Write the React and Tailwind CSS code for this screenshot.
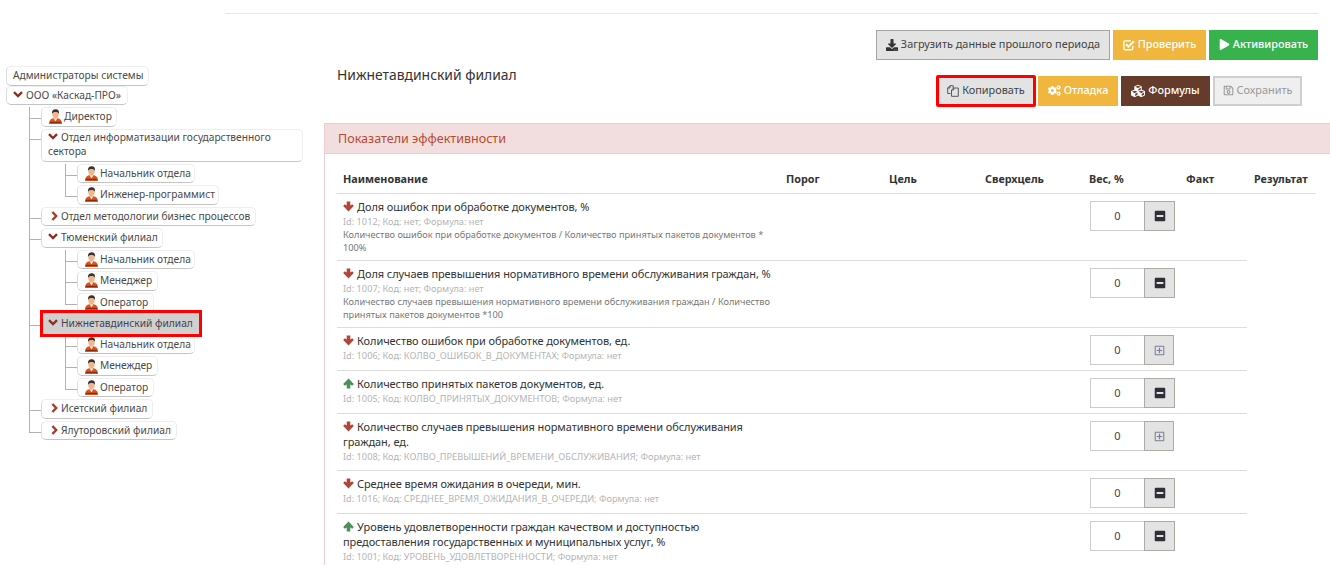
import React from "react";
import { FaDownload, FaPlay, FaCogs, FaCubes, FaRegSave, FaMinusSquare, FaRegPlusSquare } from "react-icons/fa";

function Person() {
  return (
    <svg width="13" height="15" viewBox="0 0 13 15" className="shrink-0">
      <path d="M0 15 C0 11 2.2 9.8 4.2 9.3 L8.8 9.3 C10.8 9.8 13 11 13 15 Z" fill="#d9541e" />
      <path d="M4.6 9.3 L6.5 12.6 L8.4 9.3 Z" fill="#f5f0e8" />
      <rect x="1" y="12.8" width="11" height="1.2" fill="#8c2a10" />
      <ellipse cx="6.5" cy="5.3" rx="3.2" ry="4.1" fill="#eeb68c" />
      <path d="M3 5 C2.5 1.4 4.7 0.2 6.8 0.2 C9.2 0.2 10.5 1.8 10 5 C9.5 3.4 8.4 2.9 6.5 2.9 C4.7 2.9 3.6 3.4 3 5 Z" fill="#3b3230" />
    </svg>
  );
}

function FilesIcon() {
  return (
    <svg width="12" height="12" viewBox="0 0 12 12" className="shrink-0" fill="none" stroke="#5a5560" strokeWidth="1">
      <path d="M3.5 8.5 H0.7 V3 L3 0.7 H6.2 V3" />
      <path d="M3 0.7 V3 H0.7" />
      <path d="M4.5 11.3 V5 L6.7 3 H11.3 V11.3 Z" fill="#e3e3e3" />
      <path d="M6.7 3 V5 H4.5" />
    </svg>
  );
}

function CheckIcon() {
  return (
    <svg width="12" height="12" viewBox="0 0 12 12" className="shrink-0" fill="none" stroke="white">
      <path d="M9.8 7 V9.3 C9.8 10.2 9.2 10.8 8.3 10.8 H2.2 C1.3 10.8 0.8 10.2 0.8 9.3 V3.4 C0.8 2.5 1.3 1.9 2.2 1.9 H8" strokeWidth="1.4" />
      <path d="M3 5.3 L5.4 7.7 L11 2.2" strokeWidth="2" />
    </svg>
  );
}

function Arrow({ up }) {
  return (
    <svg width="11" height="11" viewBox="0 0 11 11" className={`inline mr-[3px] align-[-1px] ${up ? "rotate-180" : ""}`}>
      <path d="M3.7 0.5 H7.3 V4.6 L9.2 3.2 L10.8 5 L5.5 10.5 L0.2 5 L1.8 3.2 L3.7 4.6 Z" fill={up ? "#4b8f5b" : "#b2453a"} />
    </svg>
  );
}

const nodeBox = "bg-white rounded-[5px] border border-[#eee] border-l-[#ddd] border-b-[#c4c4c4] text-[#4a4a4a]";

function Chev({ kind }) {
  if (kind === "down")
    return (
      <svg width="10" height="7" viewBox="0 0 10 7" className="inline mr-[3px] align-[1px]">
        <path d="M1 1.2 L5 5 L9 1.2" fill="none" stroke="#8f2f20" strokeWidth="2.4" />
      </svg>
    );
  if (kind === "right")
    return (
      <svg width="7" height="10" viewBox="0 0 7 10" className="inline ml-[3px] mr-[3px] align-[-1px]">
        <path d="M1.4 1 L5.2 5 L1.4 9" fill="none" stroke="#a93a22" strokeWidth="2.4" />
      </svg>
    );
  return null;
}

function Connector({ last, h }) {
  return (
    <div className="flex flex-col w-[12px] shrink-0">
      <div className={`${h} border-l border-b border-[#b5b0ab] shrink-0`} />
      {!last && <div className="flex-1 border-l border-[#b5b0ab]" />}
    </div>
  );
}

function Node({ label, icon, w, mb = "mb-[2px]" }) {
  return (
    <div className={`${w} h-[19.5px] ${mb} ${nodeBox} ${icon === "person" ? "pl-[7px]" : "pl-[6px]"} flex items-center whitespace-nowrap`}>
      {icon === "person" && <span className="mr-[2px] flex"><Person /></span>}
      <span><Chev kind={icon} />{label}</span>
    </div>
  );
}

function Selected({ label }) {
  return (
    <div className="relative z-10 w-[156px] h-[21px] ml-[2px] -mt-[0.75px] mb-[0.5px] outline-[3px] outline-[#ff0000] bg-[#d0d0d0] pl-[5px] flex items-center whitespace-nowrap text-[#44404a]">
      <span><Chev kind="down" />{label}</span>
    </div>
  );
}

function Child({ last, children, top = "h-[12px]" }) {
  return (
    <div className="flex">
      <Connector last={last} h={top} />
      <div className="flex-1 min-w-0">{children}</div>
    </div>
  );
}

function Tree() {
  const p = (n, w, last) => (
    <Child last={last}><Node label={n} icon="person" w={w} /></Child>
  );
  return (
    <div className="w-[324px] pt-[6px] pl-[6px] text-[10.2px] shrink-0">
      <Node label="Администраторы системы" w="w-[143px]" mb="mb-[0px]" />
      <Node label="ООО «Каскад-ПРО»" icon="down" w="w-[122px]" />
      <div className="ml-[23px]">
        <Child><Node label="Директор" icon="person" w="w-[76px]" mb="mb-[2.5px]" /></Child>
        <Child top="h-[11px]">
          <div className={`w-[262px] h-[33px] mb-[1.5px] pl-[6px] leading-[14px] ${nodeBox}`}>
            <Chev kind="down" />Отдел информатизации государственного сектора
          </div>
          <div className="ml-[24px]">
            {p("Начальник отдела", "w-[118px]")}
            {p("Инженер-программист", "w-[142px]", true)}
          </div>
        </Child>
        <Child><Node label="Отдел методологии бизнес процессов" icon="right" w="w-[215px]" /></Child>
        <Child>
          <Node label="Тюменский филиал" icon="down" w="w-[122px]" />
          <div className="ml-[24px]">
            {p("Начальник отдела", "w-[118px]")}
            {p("Менеджер", "w-[81px]")}
            {p("Оператор", "w-[77px]", true)}
          </div>
        </Child>
        <Child>
          <Selected label="Нижнетавдинский филиал" />
          <div className="ml-[24px]">
            {p("Начальник отдела", "w-[118px]")}
            {p("Менеждер", "w-[81px]")}
            {p("Оператор", "w-[77px]", true)}
          </div>
        </Child>
        <Child><Node label="Исетский филиал" icon="right" w="w-[112px]" /></Child>
        <Child last><Node label="Ялуторовский филиал" icon="right" w="w-[136px]" /></Child>
      </div>
    </div>
  );
}

function Btn({ cls, children, w, h = "h-[30px]" }) {
  return (
    <button className={`${w} ${h} pb-[1px] flex items-center justify-center gap-[3px] text-[10.9px] whitespace-nowrap ${cls}`}>
      {children}
    </button>
  );
}

const rows = [
  { up: false, title: "Доля ошибок при обработке документов, %", meta: "Id: 1012; Код: нет; Формула: нет", desc: "Количество ошибок при обработке документов / Количество принятых пакетов документов * 100%", h: "h-[67px]", plus: false },
  { up: false, title: "Доля случаев превышения нормативного времени обслуживания граждан, %", meta: "Id: 1007; Код: нет; Формула: нет", desc: "Количество случаев превышения нормативного времени обслуживания граждан / Количество принятых пакетов документов *100", h: "h-[67px]", plus: false },
  { up: false, title: "Количество ошибок при обработке документов, ед.", meta: "Id: 1006; Код: КОЛВО_ОШИБОК_В_ДОКУМЕНТАХ; Формула: нет", h: "h-[43px]", plus: true },
  { up: true, title: "Количество принятых пакетов документов, ед.", meta: "Id: 1005; Код: КОЛВО_ПРИНЯТЫХ_ДОКУМЕНТОВ; Формула: нет", h: "h-[43px]", plus: false },
  { up: false, title: "Количество случаев превышения нормативного времени обслуживания граждан, ед.", meta: "Id: 1008; Код: КОЛВО_ПРЕВЫШЕНИЙ_ВРЕМЕНИ_ОБСЛУЖИВАНИЯ; Формула: нет", h: "h-[57px]", plus: true },
  { up: false, title: "Среднее время ожидания в очереди, мин.", meta: "Id: 1016; Код: СРЕДНЕЕ_ВРЕМЯ_ОЖИДАНИЯ_В_ОЧЕРЕДИ; Формула: нет", h: "h-[43px]", plus: false },
  { up: true, title: "Уровень удовлетворенности граждан качеством и доступностью предоставления государственных и муниципальных услуг, %", meta: "Id: 1001; Код: УРОВЕНЬ_УДОВЛЕТВОРЕННОСТИ; Формула: нет", h: "h-[57px]", plus: false },
];

function Row({ r }) {
  return (
    <div className={`flex w-[910px] ${r.h} border-b border-[#ddd]`}>
      <div className="w-[442px] pl-[6px] pr-[3px] pt-[5px] shrink-0">
        <div className="text-[11px] leading-[15px] text-[#333] tracking-[-0.08px]">
          <Arrow up={r.up} />
          {r.title}
        </div>
        <div className="text-[9.2px] leading-[13px] text-[#b5b5b5] mt-[1px]">{r.meta}</div>
        {r.desc && <div className="text-[9.2px] leading-[13px] text-[#777]">{r.desc}</div>}
      </div>
      <div className="ml-[311px] pt-[7px] flex h-[37px] shrink-0">
        <div className="w-[54px] h-[30px] border border-[#ccc] border-r-0 bg-white flex items-center justify-center text-[11px] text-[#444]">0</div>
        <div className={`${r.plus ? "w-[30px]" : "w-[31px]"} h-[30px] border border-[#b0aaa5] bg-[#e3e3e3] flex items-center justify-center`}>
          {r.plus
            ? <FaRegPlusSquare className="text-[#7a7f96] text-[11px]" />
            : <FaMinusSquare className="text-[#2f2f38] text-[12px]" />}
        </div>
      </div>
    </div>
  );
}

export default function App() {
  return (
    <div className="w-[1330px] h-[565px] overflow-hidden bg-white flex flex-col font-['Noto_Sans','Open_Sans',sans-serif] text-[#333]">
      <div className="ml-[225px] mr-[12px] mt-[13px] border-t border-[#e5e5e5] shrink-0" />
      <div className="flex justify-end gap-[3px] pr-[12px] mt-[16px] shrink-0 h-[30px]">
        <Btn w="w-[234px]" cls="bg-[#e3e3e3] border border-[#a8a39e] text-[#444]"><FaDownload className="text-[12px] text-[#333]" />Загрузить данные прошлого периода</Btn>
        <Btn w="w-[93px]" cls="bg-[#f0b63d] text-white font-medium"><CheckIcon />Проверить</Btn>
        <Btn w="w-[109px]" cls="bg-[#37b24d] text-white font-medium"><FaPlay className="text-[11px]" />Активировать</Btn>
      </div>
      <div className="flex flex-1 min-h-0">
        <Tree />
        <div className="flex-1 min-w-0 flex flex-col">
          <div className="flex h-[63px] shrink-0">
            <div className="pl-[13px] pt-[7px] text-[13.9px] leading-[16px] text-[#333] w-[612px]">Нижнетавдинский филиал</div>
            <div className="flex items-start gap-[3px] h-[32px] mt-[15px]">
              <Btn w="w-[100px] -mr-[1px]" h="h-[32px]" cls="bg-[#e3e3e3] border-[3px] border-[#ff0000] rounded-[2px] text-[#444]"><FilesIcon />Копировать</Btn>
              <Btn w="w-[80px] mt-[1px]" cls="bg-[#f0b63d] text-white font-medium"><FaCogs className="text-[13px]" />Отладка</Btn>
              <Btn w="w-[89px] mt-[1px]" cls="bg-[#653b2b] text-white font-medium"><FaCubes className="text-[14px]" />Формулы</Btn>
              <Btn w="w-[89px] mt-[1px]" cls="bg-[#efefef] border-2 border-[#cfcfcf] text-[#999]"><FaRegSave className="text-[11px]" />Сохранить</Btn>
            </div>
          </div>
          <div className="flex-1 min-h-0 border-l border-t border-[#ebccd1]">
            <div className="h-[30px] bg-[#f2dede] border-b border-[#ebccd1] pl-[13px] pt-[2px] flex items-center text-[12.55px] text-[#b94a30]">Показатели эффективности</div>
            <div className="pl-[12px]">
              <div className="w-[979px] h-[40px] border-b border-[#ddd] grid grid-cols-[443px_103px_96px_104px_97px_68px_1fr] pl-[6px] pt-[18px] text-[10.8px] font-bold text-[#333] leading-[14px]">
                <div>Наименование</div><div>Порог</div><div>Цель</div><div>Сверхцель</div><div>Вес, %</div><div>Факт</div><div>Результат</div>
              </div>
              {rows.map((r, i) => <Row key={i} r={r} />)}
            </div>
          </div>
        </div>
      </div>
    </div>
  );
}
